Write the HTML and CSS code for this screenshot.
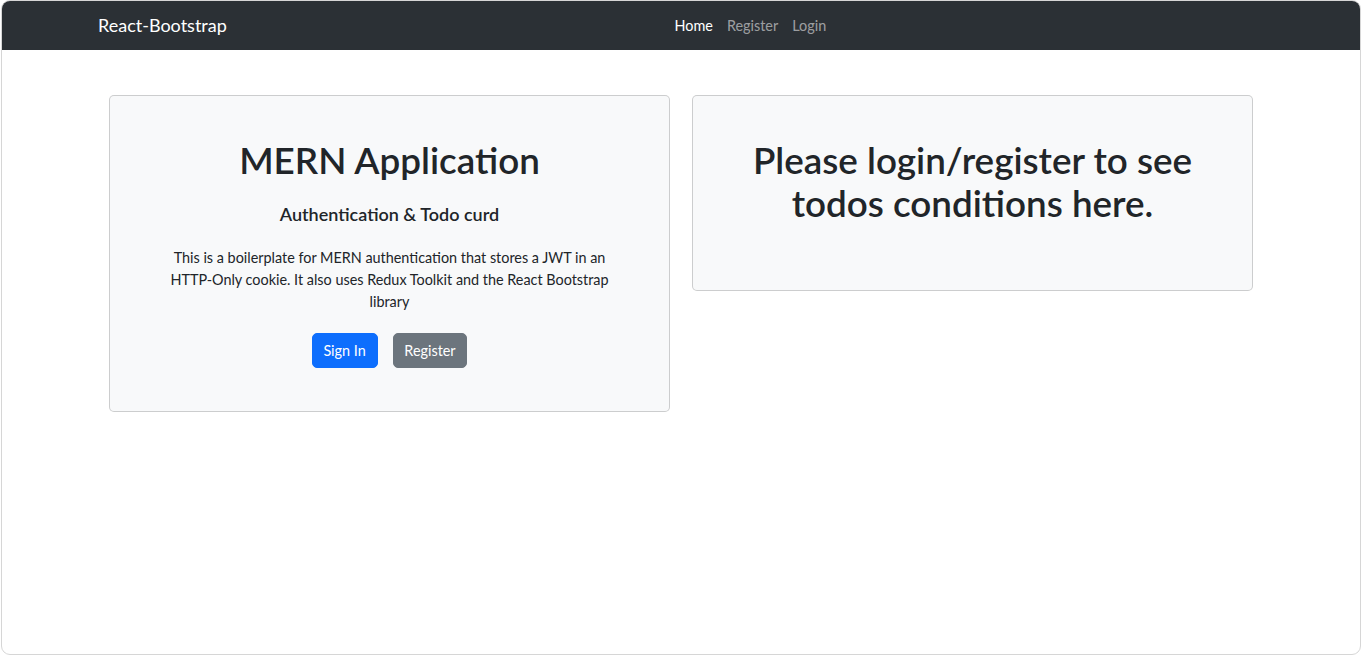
FILE: index.html
```html
<!DOCTYPE html>
<html lang="en">
<head>
<meta charset="utf-8">
<title>MERN App</title>
<link rel="stylesheet" href="styles.css">
</head>
<body>
<div class="window">
  <header class="navbar">
    <a class="brand" href="#">React-Bootstrap</a>
    <nav class="nav">
      <a class="nav-link active" href="#">Home</a>
      <a class="nav-link" href="#">Register</a>
      <a class="nav-link" href="#">Login</a>
    </nav>
  </header>
  <main class="main">
    <section class="card">
      <h1 class="title">MERN Application</h1>
      <h5 class="subtitle">Authentication &amp; Todo curd</h5>
      <p class="lead-text">This is a boilerplate for MERN authentication that stores a JWT in an HTTP-Only cookie. It also uses Redux Toolkit and the React Bootstrap library</p>
      <div class="actions">
        <a class="btn btn-primary" href="#">Sign In</a>
        <a class="btn btn-secondary" href="#">Register</a>
      </div>
    </section>
    <section class="card">
      <h1 class="title title-wide">Please login/register to see todos conditions here.</h1>
    </section>
  </main>
</div>
</body>
</html>
```
FILE: styles.css
```css
* { box-sizing: border-box; }
html, body { margin: 0; padding: 0; background: #ffffff; }
body {
  font-family: Lato, "Liberation Sans", sans-serif;
  color: #212529;
  font-size: 14.4px;
  line-height: 1.5;
}
.window {
  margin-left: 1px;
  width: 1360px;
  height: 655px;
  border: 1px solid #d6d6d6;
  border-radius: 9px;
  overflow: hidden;
  background: #fff;
}
.navbar {
  height: 49px;
  background: #2b3035;
  display: flex;
  align-items: center;
  padding: 0 96px;
}
.brand {
  color: #fff;
  text-decoration: none;
  font-size: 18px;
  margin-right: 16px;
  line-height: 27px;
}
.nav {
  margin: 0 auto;
  display: flex;
  padding-right: 6px;
}
.nav-link {
  color: rgba(255,255,255,0.55);
  text-decoration: none;
  padding: 0 7px;
  font-size: 14.4px;
}
.nav-link.active { color: #fff; }
.main {
  display: flex;
  justify-content: center;
  align-items: flex-start;
  gap: 22px;
  padding-top: 45px;
}
.card {
  width: 561px;
  background: #f8f9fa;
  border: 1px solid rgba(0,0,0,0.175);
  border-radius: 5px;
  padding: 43px 20px;
  display: flex;
  flex-direction: column;
  align-items: center;
  text-align: center;
}
.title {
  margin: 0 0 21.6px;
  font-size: 36.8px;
  font-weight: 600;
  line-height: 43.2px;
}
.title-wide { max-width: 470px; }
.subtitle {
  margin: 0 0 22px;
  font-size: 18px;
  font-weight: 600;
  line-height: 1.2;
}
.lead-text {
  margin: 0 0 21px;
  max-width: 450px;
}
.actions { display: flex; gap: 15px; }
.btn {
  display: inline-block;
  padding: 5.4px 10.8px;
  border: 1px solid transparent;
  border-radius: 5px;
  color: #fff;
  text-decoration: none;
  font-size: 14.4px;
  line-height: 21.6px;
}
.btn-primary { background: #0d6efd; border-color: #0d6efd; }
.btn-secondary { background: #6c757d; border-color: #6c757d; }
```
